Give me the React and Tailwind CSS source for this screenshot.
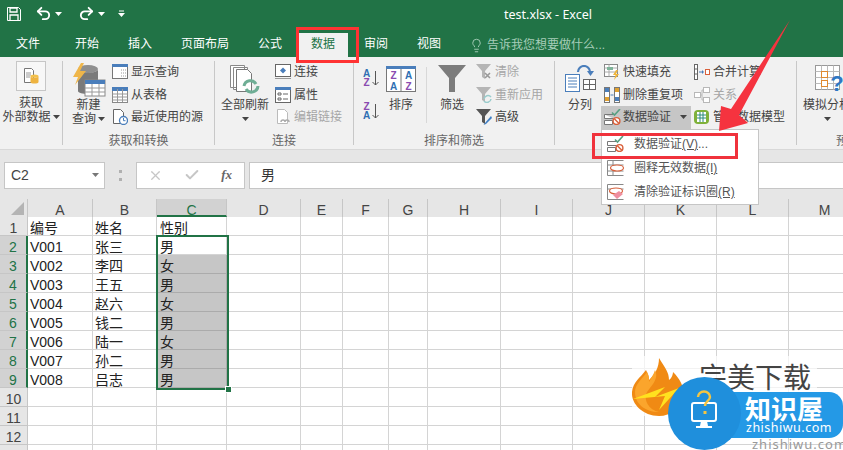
import { Undo2, Redo2, Lightbulb, Check, X } from "lucide-react";

const BLUE = "#4a7ebb";

function Caret({ color = "#444" }) {
  return (
    <svg width="7" height="4" viewBox="0 0 7 4" className="shrink-0">
      <path d="M0 0h7L3.500 4z" fill={color} />
    </svg>
  );
}

function Sheet({ children, w = 16, h = 16 }) {
  return (
    <svg width={w} height={h} viewBox={`0 0 ${w} ${h}`} className="shrink-0">
      {children}
    </svg>
  );
}

const ShowQuery = () => (
  <Sheet>
    <rect x="0.5" y="0.5" width="15" height="14" fill="#fff" stroke="#777" />
    <rect x="0" y="0" width="16" height="3" fill={BLUE} />
    <path d="M9 6h5M9 9h5M9 12h5" stroke="#999" strokeDasharray="1 1" />
  </Sheet>
);
const FromTable = () => (
  <Sheet>
    <rect x="0.5" y="1.5" width="15" height="14" fill="#fff" stroke="#888" />
    <rect x="0" y="0" width="16" height="4" fill={BLUE} />
    <path d="M0.5 7h15M0.5 10h15M0.5 13h15M5.5 2v13M10.5 2v13" stroke="#999" />
  </Sheet>
);
const RecentSource = () => (
  <Sheet>
    <path d="M1.5.5h7l3 3v11h-10z" fill="#fff" stroke="#666" />
    <circle cx="11.5" cy="11.5" r="4" fill="#fff" stroke={BLUE} strokeWidth="1.3" />
    <path d="M11.5 9v2.7h2" stroke={BLUE} fill="none" />
  </Sheet>
);
const Connections = () => (
  <Sheet>
    <rect x="0.5" y="0.5" width="15" height="12" fill="#fff" stroke="#666" />
    <path d="M8 3.5l3 3-3 3-3-3z" fill={BLUE} />
    <path d="M0 14.5h16" stroke="#999" />
  </Sheet>
);
const Properties = () => (
  <Sheet>
    <rect x="0.5" y="0.5" width="15" height="15" fill="#fff" stroke="#666" />
    <rect x="0" y="0" width="16" height="3" fill={BLUE} />
    <path d="M3 6h3v2H3zM3 11h3v2H3zM8 7h5M8 12h5" stroke="#666" fill="none" />
  </Sheet>
);
const EditLinks = () => (
  <Sheet>
    <path d="M2.5.5h7l3 3v11h-10z" fill="#fff" stroke="#bbb" />
    <path d="M6 13a2 2 0 014 0 2 2 0 014 0" stroke="#aaa" fill="none" strokeWidth="1.4" />
  </Sheet>
);
const FunnelSmall = ({ fill = "#b5b5b5", children }) => (
  <Sheet>
    <path d="M0 0h15L9 7v8L6 13V7z" fill={fill} />
    {children}
  </Sheet>
);
const FlashFill = () => (
  <Sheet>
    <rect x="0.5" y="0.5" width="13" height="12" fill="#fff" stroke="#888" />
    <path d="M0.5 4h13M0.5 8h13M5 .5v12" stroke="#aaa" />
    <path d="M3 3h6v3H3z" fill="#7fb39a" />
    <path d="M12 6l-3 5h2.5L10 16l5-6h-3l2-4z" fill="#f0b53a" />
  </Sheet>
);
const RemoveDup = () => (
  <Sheet>
    <rect x="0.5" y="0.5" width="5" height="15" fill="#fff" stroke="#777" />
    <rect x="10.5" y="0.5" width="5" height="15" fill="#fff" stroke="#777" />
    <rect x="1" y="1" width="4" height="4" fill={BLUE} />
    <rect x="1" y="10" width="4" height="4" fill="#e0a030" />
    <rect x="11" y="1" width="4" height="4" fill="#e0a030" />
    <rect x="11" y="10" width="4" height="4" fill={BLUE} />
    <path d="M6.5 8h3" stroke={BLUE} />
  </Sheet>
);
const Validate = () => (
  <Sheet w={18} h={16}>
    <path d="M.5 5.5h9M.5 5.5v4h9M.5 11.5h8v4h-8z" stroke="#777" fill="#fff" />
    <path d="M8 3.5l2.5 2.5L16 0" stroke="#58a082" strokeWidth="1.6" fill="none" />
    <circle cx="12.5" cy="12" r="3.4" fill="#fff" stroke="#d9603b" strokeWidth="1.4" />
    <path d="M10.3 9.8l4.5 4.5" stroke="#d9603b" strokeWidth="1.4" />
  </Sheet>
);
const CircleInvalid = () => (
  <Sheet w={18} h={16}>
    <path d="M.5.5h16M.5 15.5h16M.5.5v15M6 .5v15M.5 5h16M.5 11h16" stroke="#888" fill="none" />
    <ellipse cx="10" cy="8" rx="6.5" ry="3" fill="#fff" stroke="#d9603b" strokeWidth="1.2" />
  </Sheet>
);
const ClearCircles = () => (
  <Sheet w={18} h={16}>
    <path d="M.5.5h16M.5 15.5h16M.5.5v15M.5 5h16" stroke="#888" fill="none" />
    <ellipse cx="9" cy="7" rx="6.5" ry="3" fill="#fff" stroke="#d9603b" strokeWidth="1.2" />
    <path d="M6 11l6-4 4 3-6 5z" fill="#ef8fa0" />
  </Sheet>
);
const Consolidate = () => (
  <Sheet>
    <rect x="0.5" y="0.5" width="3" height="15" fill="#fff" stroke="#666" />
    <path d="M0.5 5h3M0.5 10h3" stroke="#666" />
    <path d="M5 8h4" stroke={BLUE} />
    <path d="M8 6l2 2-2 2z" fill={BLUE} />
    <rect x="11.5" y="5.5" width="4" height="5" fill="#fff" stroke="#d9603b" />
  </Sheet>
);
const Relations = () => (
  <Sheet>
    <g stroke="#b8b8b8" fill="#fff">
      <rect x="0.5" y="5.5" width="6" height="5" />
      <rect x="9.5" y="0.5" width="6" height="5" />
      <rect x="9.5" y="10.5" width="6" height="5" />
      <path d="M6.5 8h1.5V3h1.5M8 8v5h1.5" fill="none" />
    </g>
  </Sheet>
);
const DataModel = () => (
  <Sheet>
    <rect x="0" y="1" width="15" height="14" rx="4" fill="#7fb13a" />
    <rect x="3" y="3" width="9" height="10" fill="#fff" />
    <path d="M3 6h9M3 9h9M6 3v10M9 3v10" stroke="#2b8a7a" />
  </Sheet>
);

function SortLetters({ top, bottom }) {
  const color = (l) => (l === "A" ? "#2f6fb3" : "#8a4bb0");
  return (
    <div className="flex items-center h-[18px] gap-[1px]">
      <div className="flex flex-col text-[10px] leading-[9px] font-bold w-[9px] text-center">
        <span style={{ color: color(top) }}>{top}</span>
        <span style={{ color: color(bottom) }}>{bottom}</span>
      </div>
      <svg width="7" height="15" viewBox="0 0 7 15">
        <path d="M3.5 0v14M.5 11l3 3 3-3" stroke="#555" fill="none" />
      </svg>
    </div>
  );
}

function LargeButton({ icon, lines, caretLine, slot = "h-[37px]", className = "" }) {
  return (
    <div className={`flex flex-col items-center shrink-0 ${className}`}>
      <div className={`${slot} flex items-start justify-center`}>{icon}</div>
      <div className="text-[12px] leading-[14px] whitespace-nowrap">{lines[0]}</div>
      <div className="text-[12px] leading-[14px] h-[14px] whitespace-nowrap flex items-center gap-[2px]">
        {lines[1]}
        {caretLine && <Caret />}
      </div>
    </div>
  );
}

function Item({ icon, text, muted, active, inset, className = "" }) {
  return (
    <div
      className={`h-[22.5px] flex items-center text-[12px] whitespace-nowrap ${active ? "gap-[1px]" : "gap-[3px]"} ${
        inset ? "pl-[3px]" : ""
      } ${muted ? "text-[#a6a6a6]" : ""} ${active ? "bg-[#c6c6c6]" : ""} ${className}`}
    >
      {icon}
      <span>{text}</span>
      {active && (
        <span className="ml-[8px]">
          <Caret />
        </span>
      )}
    </div>
  );
}

function Group({ width, label, children }) {
  return (
    <div className="flex flex-col h-full pt-[4px] shrink-0" style={{ width }}>
      <div className="flex flex-1 min-h-0">{children}</div>
      <div className="h-[16px] leading-[16px] text-center text-[12px] text-[#666] whitespace-nowrap">
        {label}
      </div>
    </div>
  );
}

const Sep = () => <div className="w-px my-[4px] bg-[#c8c8c8] shrink-0" />;

function Ribbon() {
  return (
    <div className="h-[92px] bg-[#f1f1f1] flex text-[#444]">
      <Group width={62} label="">
        <LargeButton
          className="w-full"
          slot="h-[35px]"
          lines={["获取", "外部数据"]}
          caretLine
          icon={
            <div className="w-[30px] h-[30px] border border-[#c6c6c6] bg-[#f7f7f7] flex items-center justify-center">
              <svg width="16" height="16" viewBox="0 0 16 16">
                <path d="M1.5.5h7l2 2v12h-9z" fill="#fff" stroke="#777" />
                <path d="M3 5h5M3 7h5M3 9h4" stroke="#999" />
                <ellipse cx="11.5" cy="8" rx="4" ry="1.6" fill="#f3c14b" />
                <path d="M7.5 8v6c0 2 8 2 8 0V8c0 2-8 2-8 0z" fill="#eeb340" />
              </svg>
            </div>
          }
        />
      </Group>
      <Sep />
      <Group width={151} label="获取和转换">
        <LargeButton
          className="w-[49px] pl-[2px]"
          lines={["新建", "查询"]}
          caretLine
          icon={
            <svg width="34" height="34" viewBox="0 0 34 34" className="mt-[2px]">
              <ellipse cx="16" cy="6" rx="10" ry="4" fill="#8f8f8f" />
              <path d="M6 6v22c0 4 20 4 20 0V6c0 5-20 5-20 0z" fill="#7a7a7a" />
              <path d="M9 0L1 14h5L3 22 14 8H8l4-8z" fill="#efb64a" />
              <rect x="13" y="17" width="20" height="16" fill="#fff" stroke="#888" />
              <rect x="13" y="17" width="20" height="4" fill={BLUE} />
              <path d="M13 25h20M13 29h20M20 21v12M27 21v12" stroke="#999" />
            </svg>
          }
        />
        <div className="flex flex-col">
          <Item icon={<ShowQuery />} text="显示查询" />
          <Item icon={<FromTable />} text="从表格" />
          <Item icon={<RecentSource />} text="最近使用的源" />
        </div>
      </Group>
      <Sep />
      <Group width={138} label="连接">
        <LargeButton
          className="w-[60px]"
          lines={["全部刷新", ""]}
          caretLine
          icon={
            <svg width="30" height="30" viewBox="0 0 30 30" className="mt-[4px]">
              <path d="M.5.5h14v22H.5zM3.5 2.5h14v22h-14z" fill="#fff" stroke="#888" />
              <path d="M6.5 4.5h11l4 4v18h-15z" fill="#fff" stroke="#777" />
              <path d="M14 21a6.5 6.5 0 0112-2M28 21a6.5 6.5 0 01-12 3" stroke="#6fae95" strokeWidth="3" fill="none" />
            </svg>
          }
        />
        <div className="flex flex-col">
          <Item icon={<Connections />} text="连接" />
          <Item icon={<Properties />} text="属性" />
          <Item icon={<EditLinks />} text="编辑链接" muted />
        </div>
      </Group>
      <Sep />
      <Group width={200} label="排序和筛选">
        <div className="w-[32px] pl-[8px] flex flex-col gap-[15px] pt-[8px] shrink-0">
          <SortLetters top="A" bottom="Z" />
          <SortLetters top="Z" bottom="A" />
        </div>
        <LargeButton
          className="w-[30px]"
          lines={["排序", ""]}
          icon={
            <svg width="30" height="26" viewBox="0 0 30 26" className="mt-[5px]">
              <rect x="0.5" y="2.5" width="29" height="23" fill="#fff" stroke="#777" />
              <rect x="0" y="0" width="30" height="3" fill={BLUE} />
              <path d="M15 3v22" stroke="#777" />
              <text x="7.5" y="13" textAnchor="middle" fontSize="10" fontWeight="700" fill="#8a4bb0">Z</text>
              <text x="7.5" y="23.5" textAnchor="middle" fontSize="10" fontWeight="700" fill="#2f6fb3">A</text>
              <text x="22.5" y="13" textAnchor="middle" fontSize="10" fontWeight="700" fill="#2f6fb3">A</text>
              <text x="22.5" y="23.5" textAnchor="middle" fontSize="10" fontWeight="700" fill="#8a4bb0">Z</text>
            </svg>
          }
        />
        <div className="w-px h-[56px] mt-[6px] ml-[10px] bg-[#d8d8d8] shrink-0" />
        <LargeButton
          className="w-[50px]"
          lines={["筛选", ""]}
          icon={
            <svg width="28" height="28" viewBox="0 0 28 28" className="mt-[4px]">
              <path d="M0 0h28L17 13v14h-6V13z" fill="#7c7c7c" />
            </svg>
          }
        />
        <div className="flex flex-col -ml-[1px]">
          <Item
            icon={
              <FunnelSmall>
                <path d="M9 9l5 5M14 9l-5 5" stroke="#999" strokeWidth="1.6" />
              </FunnelSmall>
            }
            text="清除"
            muted
          />
          <Item
            icon={
              <FunnelSmall>
                <path d="M8 12a4 4 0 017-2M15 12a4 4 0 01-7 2" stroke="#9cc" strokeWidth="1.5" fill="none" />
              </FunnelSmall>
            }
            text="重新应用"
            muted
          />
          <Item
            icon={
              <FunnelSmall fill="#555">
                <path d="M15 7l-6 7-1.5 2 2.5-1 6-6z" fill="#3f7fc4" />
              </FunnelSmall>
            }
            text="高级"
          />
        </div>
      </Group>
      <Sep />
      <Group width={241} label="">
        <LargeButton
          className="w-[46px] pl-[4px]"
          lines={["分列", ""]}
          icon={
            <svg width="31" height="27" viewBox="0 0 31 27" className="mt-[4px]">
              <path d="M13 7a6 6 0 0112 0" stroke={BLUE} strokeWidth="2.2" fill="none" />
              <path d="M22 6h7l-3.500 5z" fill={BLUE} />
              <rect x="0.5" y="9.500" width="14" height="17" fill="#fff" stroke={BLUE} />
              <path d="M3 13h9M3 16h9M3 19h9M3 22h9" stroke={BLUE} />
              <rect x="18.500" y="14.500" width="12" height="10" fill="#fff" stroke="#666" />
              <path d="M18.500 19.500h12M24.500 14.500v10" stroke="#666" />
            </svg>
          }
        />
        <div className="flex flex-col w-[93px] shrink-0">
          <Item icon={<FlashFill />} text="快速填充" inset />
          <Item icon={<RemoveDup />} text="删除重复项" inset />
          <Item icon={<Validate />} text="数据验证" active inset className="w-[90px]" />
        </div>
        <div className="flex flex-col">
          <Item icon={<Consolidate />} text="合并计算" />
          <Item icon={<Relations />} text="关系" muted />
          <Item icon={<DataModel />} text="管理数据模型" />
        </div>
      </Group>
      <Sep />
      <Group width={102} label="预测">
        <LargeButton
          className="w-[60px]"
          lines={["模拟分析", ""]}
          caretLine
          icon={
            <svg width="28" height="30" viewBox="0 0 28 30" className="mt-[4px] ml-[4px]">
              <rect x="0.5" y="0.5" width="24" height="24" fill="#fff" stroke="#999" />
              <path d="M.5 6.500h24M.5 12.500h24M.5 18.500h24M6.500.5v24M12.500.5v24M18.500.5v24" stroke="#bbb" />
              <rect x="6.500" y="6.500" width="6" height="6" fill="#fff" stroke="#e0892f" />
              <rect x="6.500" y="15.500" width="6" height="6" fill="#fff" stroke="#e0892f" />
              <text x="22" y="26" textAnchor="middle" fontSize="22" fontWeight="700" fill="#2f78c4">?</text>
            </svg>
          }
        />
      </Group>
    </div>
  );
}

const TABS = ["开始", "插入", "页面布局", "公式", "数据", "审阅", "视图"];

function TitleBar() {
  return (
    <div className="h-[57px] bg-[#217346] text-white flex flex-col">
      <div className="h-[27px] flex items-center relative">
        <svg width="14" height="14" viewBox="0 0 14 14" className="ml-[7px]">
          <path d="M.5.500h11l2 2v11H.5z" fill="none" stroke="#fff" />
          <path d="M3 1v4h7V1zM3 13V8h8v5" fill="none" stroke="#fff" strokeWidth="1.300" />
        </svg>
        <Undo2 size={17} strokeWidth={2.6} className="ml-[14px]" />
        <span className="ml-[3px]">
          <Caret color="#fff" />
        </span>
        <Redo2 size={17} strokeWidth={2.6} className="ml-[16px]" />
        <span className="ml-[3px]">
          <Caret color="#fff" />
        </span>
        <svg width="7" height="7" viewBox="0 0 7 7" className="ml-[13px]">
          <path d="M1 1h5" stroke="#fff" />
          <path d="M0 3h7L3.500 7z" fill="#fff" />
        </svg>
        <span className="absolute left-[504px] top-[7px] text-[12.500px] leading-[16px] [font-family:'Noto_Sans',sans-serif]">
          test.xlsx - Excel
        </span>
      </div>
      <div className="h-[6px]" />
      <div className="h-[24px] flex items-stretch text-[12px] gap-[3px]">
        <div className="w-[59px] pl-[16px] leading-[23px]">文件</div>
        {TABS.map((t) => (
          <div
            key={t}
            className={`px-[13px] leading-[23px] ${t === "数据" ? "bg-[#f1f1f1] text-[#217346]" : ""}`}
          >
            {t}
          </div>
        ))}
        <div className="flex items-center ml-[12px] text-[#a6cdb8] gap-[3px]">
          <Lightbulb size={15} strokeWidth={1.500} />
          <span>告诉我您想要做什么...</span>
        </div>
      </div>
    </div>
  );
}

function FormulaBar() {
  return (
    <div className="h-[50px] bg-[#e6e6e6] border-t border-[#d8d8d8] flex items-center pl-[4px] pt-[1px]">
      <div className="w-[101px] h-[27px] bg-white border border-[#c6c6c6] flex items-center justify-between pl-[6px] pr-[5px] text-[14px] text-[#444]">
        <span>C2</span>
        <Caret color="#777" />
      </div>
      <div className="w-[31px] flex justify-center">
        <div className="w-0 h-[11px] border-l-[3px] border-dotted border-[#b0b0b0]" />
      </div>
      <div className="w-[109px] h-[27px] bg-white border border-[#c6c6c6] flex items-center justify-between pl-[11px] pr-[12px] text-[#c6c6c6]">
        <X size={15} strokeWidth={2} />
        <Check size={16} strokeWidth={3} />
        <span className="text-[13px] font-bold italic text-[#666] [font-family:'Liberation_Serif',serif]">fx</span>
      </div>
      <div className="flex-1 ml-[4px] h-[27px] bg-white border-y border-l border-[#c6c6c6] flex items-center pl-[11px] text-[14px] text-[#333]">
        男
      </div>
    </div>
  );
}

const COLS = ["A", "B", "C", "D", "E", "F", "G", "H", "I", "J", "K", "L", "M"];
const DATA = [
  ["编号", "姓名", "性别"],
  ["V001", "张三", "男"],
  ["V002", "李四", "女"],
  ["V003", "王五", "男"],
  ["V004", "赵六", "女"],
  ["V005", "钱二", "男"],
  ["V006", "陆一", "女"],
  ["V007", "孙二", "男"],
  ["V008", "吕志", "男"],
  [],
  [],
  [],
  [],
];

function Sheetgrid() {
  return (
    <div className="relative bg-white">
      <div className="grid grid-cols-[28px_65px_64px_70px_74px_42px_46px_39px_73px_72px_72px_72px_72px_72px] auto-rows-[19px] text-[14px] text-[#222]">
        <div className="h-[18px] bg-[#e6e6e6] border-r border-[#c6c6c6] relative">
          <svg width="13" height="13" viewBox="0 0 13 13" className="absolute right-[3px] bottom-[2px]">
            <path d="M13 0v13H0z" fill="#b4b4b4" />
          </svg>
        </div>
        {COLS.map((c) => (
          <div
            key={c}
            className={`h-[18px] leading-[22px] text-center border-r border-[#c6c6c6] ${
              c === "C" ? "bg-[#d2d2d2] text-[#217346] border-b-2 border-b-[#217346]" : "bg-[#e6e6e6] text-[#444]"
            }`}
          >
            {c}
          </div>
        ))}
        {DATA.map((row, r) => (
          <Row key={r} n={r + 1} row={row} />
        ))}
      </div>
      {/* selection outline on column C */}
      <div className="absolute left-[156px] top-[36px] w-[73px] h-[155px] border-2 border-[#217346]" />
      <div className="absolute left-[225px] top-[187px] w-[7px] h-[7px] bg-[#217346] border border-white" />
    </div>
  );
}

function Row({ n, row }) {
  const selected = n >= 2 && n <= 9;
  return (
    <>
      <div
        className={`-mt-px h-[19px] leading-[23px] text-center border-b border-[#c6c6c6] ${
          selected
            ? "bg-[#d2d2d2] text-[#217346] border-r-2 border-r-[#217346]"
            : "bg-[#e6e6e6] text-[#444] border-r border-r-[#c6c6c6]"
        }`}
      >
        {n <= 12 ? n : ""}
      </div>
      {COLS.map((c, i) => {
        const filled = c === "C" && n >= 3 && n <= 9;
        return (
          <div
            key={c}
            className={`-mt-px h-[19px] leading-[23px] overflow-hidden whitespace-nowrap border-r border-b ${
              c === "C" ? "pl-[3px]" : "pl-[2px]"
            } ${filled ? "bg-[#c6c6c6] border-[#ababab]" : "border-[#d4d4d4]"}`}
          >
            {row[i]}
          </div>
        );
      })}
    </>
  );
}

function DropMenu() {
  const items = [
    [<Validate key="a" />, "数据验证", "(V)", "..."],
    [<CircleInvalid key="b" />, "圈释无效数据", "(I)", ""],
    [<ClearCircles key="c" />, "清除验证标识圈", "(R)", ""],
  ];
  return (
    <div className="absolute left-[601px] top-[129px] w-[158px] h-[76px] bg-white border border-[#c6c6c6] pt-[2px] text-[12px] text-[#555]">
      {items.map(([icon, text, key, tail]) => (
        <div key={text} className="h-[24px] flex items-center pl-[5px] gap-[9px]">
          {icon}
          <span className="whitespace-nowrap">
            {text}
            <span className="underline">{key}</span>
            {tail}
          </span>
        </div>
      ))}
    </div>
  );
}

function Annotations() {
  return (
    <>
      <div className="absolute left-[296px] top-[27px] w-[63px] h-[36px] border-[3px] border-[#ff3333]" />
      <div className="absolute left-[592px] top-[133px] w-[146px] h-[26px] border-[3px] border-[#f0323c]" />
      <svg width="843" height="450" viewBox="0 0 843 450" className="absolute left-0 top-0 pointer-events-none">
        <path d="M790 20L739 115 748 123 719 131 721 106 731 109z" fill="#f5333f" />
      </svg>
    </>
  );
}

function Watermark() {
  return (
    <>
      <div className="absolute left-[632px] top-[356px] w-[185px] h-[60px] bg-white/70" />
      <svg width="60" height="60" viewBox="0 0 60 60" className="absolute left-[631px] top-[358px]">
        <path d="M28 0c6 10 10 14 10 22 3-2 4-6 4-8 6 6 12 14 10 26-2 10-12 18-24 18C12 58 0 46 1 34c1-10 8-14 14-22 2 4 3 6 3 10 6-6 10-12 10-22z" fill="#f08a14" />
        <path d="M24 12c4 8-2 14-8 22-4 8 2 18 12 20-14 0-24-8-24-20 0-8 8-14 12-20 2 4 2 6 2 10 2-4 5-8 6-12z" fill="#fba52c" />
        <path d="M2 41l32-12-10 10 24-9-20 22 6-14L2 41z" fill="#ffe11f" />
      </svg>
      <div className="absolute left-[699px] top-[361px] text-[28px] leading-[36px] text-[#444] whitespace-nowrap">
        完美下载
      </div>
      <div className="absolute left-[700px] top-[392px] w-[143px] h-[46px] rounded-r-[14px] bg-[#2499e6]" />
      <div className="absolute left-[668px] top-[377px] w-[73px] h-[73px] rounded-full bg-[#1f8fdc]" />
      <svg width="28" height="42" viewBox="0 0 28 42" className="absolute left-[690px] top-[389px]">
        <rect x="2" y="14" width="24" height="18" rx="2" fill="none" stroke="#fff" strokeWidth="2" />
        <path d="M11 32h6l1 5h4v2H6v-2h4z" fill="#fff" />
        <path d="M8 8a6 5.500 0 1112 0c0 4-5 4-5 9" fill="none" stroke="#f4c542" strokeWidth="2.500" />
        <rect x="13.500" y="22" width="3" height="3" fill="#f4c542" />
      </svg>
      <div className="absolute left-[745px] top-[395px] text-[26px] leading-[30px] font-bold text-white whitespace-nowrap">
        知识屋
      </div>
      <div className="absolute left-[746px] top-[421px] text-[12.500px] leading-[14px] tracking-[0.5px] text-white whitespace-nowrap [font-family:'Noto_Sans',sans-serif]">
        zhishiwu.com
      </div>
      <div className="absolute left-[752px] top-[437px] text-[13px] leading-[14px] tracking-[1px] text-[#999] whitespace-nowrap [font-family:'Noto_Sans',sans-serif]">
        zhishiwu.com
      </div>
    </>
  );
}

export default function App() {
  return (
    <div className="relative w-[843px] h-[450px] overflow-hidden bg-white [font-family:'Liberation_Sans','Noto_Sans_CJK_SC',sans-serif]">
      <TitleBar />
      <Ribbon />
      <FormulaBar />
      <Sheetgrid />
      <DropMenu />
      <Annotations />
      <Watermark />
    </div>
  );
}
